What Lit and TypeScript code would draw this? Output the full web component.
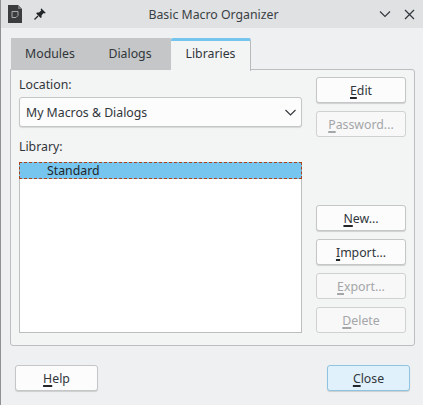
import { LitElement, html, css } from "lit";
import { customElement } from "lit/decorators.js";

@customElement("app-root")
export class AppRoot extends LitElement {
  static styles = css`
    :host {
      display: flex;
      flex-direction: column;
      width: 423px;
      height: 405px;
      box-sizing: border-box;
      background: #eff0f1;
      border-left: 1px solid #8f9193;
      font-family: "Noto Sans", "Open Sans", sans-serif;
      font-size: 12.3px;
      color: #31363b;
      overflow: hidden;
    }
    .title {
      height: 28px;
      flex: none;
      background: #dfe1e3;
      display: flex;
      align-items: center;
      padding: 0 8px 0 7px;
    }
    .title svg { display: block; flex: none; }
    .pin { margin-left: 12px; }
    .name { flex: 1; text-align: center; font-size: 12.3px; color: #3a3f44; padding-left: 2px; }
    .close-x { margin-left: 13px; }
    .body {
      flex: 1;
      display: flex;
      flex-direction: column;
      padding: 10px 8px 14px 9px;
    }
    .tabs { display: flex; height: 32px; padding-left: 1px; position: relative; z-index: 1; }
    .tab {
      background: #c5c6c7;
      display: flex;
      align-items: center;
      justify-content: center;
      color: #31363b;
      padding-bottom: 2px;
      box-sizing: border-box;
    }
    .t1 { width: 80px; padding-right: 2px; }
    .t2 { width: 80px; padding-right: 2px; }
    .t3 {
      width: 80px;
      background: #f3f4f4;
      border-top: 3px solid #76c5ef;
      border-right: 1px solid #b8babc;
      border-radius: 2px 2px 0 0;
      padding-bottom: 5px;
      margin-bottom: -1px;
    }
    .panel {
      height: 277px;
      box-sizing: border-box;
      background: #f3f4f4;
      border: 1px solid #bcbebf;
      border-radius: 0 3px 3px 3px;
      padding: 7px 7px 12px 8px;
      display: flex;
      gap: 14px;
      margin-top: -1px;
    }
    .left { width: 283px; display: flex; flex-direction: column; flex: none; }
    .lbl { height: 20px; line-height: 16px; }
    .combo {
      height: 30px;
      box-sizing: border-box;
      margin-top: 0;
      background: #fcfcfc;
      border: 1px solid #c4c6c7;
      border-radius: 3px;
      box-shadow: 0 1px 1px rgba(0,0,0,.12);
      display: flex;
      align-items: center;
      justify-content: space-between;
      padding: 0 5px 0 6px;
    }
    .lib { margin-top: 12px; height: 23px; }
    .list {
      flex: 1;
      background: #fff;
      border: 1px solid #bcbebf;
      border-top: none;
      box-sizing: border-box;
    }
    .row {
      height: 17px;
      margin: 0 -1px;
      box-sizing: border-box;
      background: #76c5ef;
      border: 1px dashed #a8431c;
      padding-left: 27px;
      line-height: 16px;
      color: #232629;
    }
    .side {
      width: 90px;
      flex: none;
      display: flex;
      flex-direction: column;
      gap: 8px;
    }
    .spacer { height: 52px; }
    .btn {
      height: 26px;
      box-sizing: border-box;
      background: #fcfcfc;
      border: 1px solid #c4c6c7;
      border-radius: 3px;
      box-shadow: 0 1px 1px rgba(0,0,0,.15);
      display: flex;
      align-items: center;
      justify-content: center;
      color: #31363b;
    }
    .btn.off { color: #a4a6a8; box-shadow: none; background: #f8f8f8; border-color: #cfd1d2; }
    u {
      text-decoration: underline;
      text-decoration-thickness: 2px;
      text-underline-offset: 2px;
      text-decoration-color: #232629;
    }
    .off u { text-decoration-color: #a4a6a8; }
    .foot { display: flex; justify-content: space-between; padding: 19px 5px 0 5px; }
    .foot .btn { width: 83px; }
    .btn.primary { background: #e0f1fb; border-color: #8fc4e0; }
  `;

  private b(m: string, rest: string, off = false) {
    return html`<div class="btn ${off ? "off" : ""}"><span><u>${m}</u>${rest}</span></div>`;
  }

  render() {
    return html`
      <div class="title">
        <svg width="14" height="18" viewBox="0 0 14 18">
          <path d="M0 0H10L14 4V18H0Z" fill="#3a3c3e" />
          <path d="M10 0L14 4H10Z" fill="#77797b" />
          <path d="M4 6.5H10V10.5L8 12.5H4Z" fill="none" stroke="#a9abad" stroke-width="1" />
        </svg>
        <svg class="pin" width="12" height="12" viewBox="0 0 12 12">
          <path d="M7.2 0.3L11.7 4.8L10.7 5.4L9.7 5L7.6 7.2L7.6 9.2L6.6 10L2.2 5.6L3 4.6L5 4.6L7.2 2.4L6.7 1.4Z" fill="#232629" />
          <path d="M4 8L0.5 11.5" stroke="#232629" stroke-width="1.2" />
        </svg>
        <div class="name">Basic Macro Organizer</div>
        <svg width="12" height="8" viewBox="0 0 12 8"><path d="M1 1.5L6 6.5L11 1.5" fill="none" stroke="#31363b" stroke-width="1.1" /></svg>
        <svg class="close-x" width="11" height="11" viewBox="0 0 11 11"><path d="M1 1L10 10M10 1L1 10" fill="none" stroke="#31363b" stroke-width="1.2" /></svg>
      </div>
      <div class="body">
        <div class="tabs">
          <div class="tab t1">Modules</div>
          <div class="tab t2">Dialogs</div>
          <div class="tab t3">Libraries</div>
        </div>
        <div class="panel">
          <div class="left">
            <div class="lbl">Location:</div>
            <div class="combo">
              <span>My Macros &amp; Dialogs</span>
              <svg width="11" height="7" viewBox="0 0 11 7"><path d="M0.5 1L5.5 6L10.5 1" fill="none" stroke="#31363b" stroke-width="1.1" /></svg>
            </div>
            <div class="lbl lib">Library:</div>
            <div class="list"><div class="row">Standard</div></div>
          </div>
          <div class="side">
            ${this.b("E", "dit")}
            ${this.b("P", "assword...", true)}
            <div class="spacer"></div>
            ${this.b("N", "ew...")}
            ${this.b("I", "mport...")}
            ${this.b("E", "xport...", true)}
            ${this.b("D", "elete", true)}
          </div>
        </div>
        <div class="foot">
          ${this.b("H", "elp")}
          <div class="btn primary"><span><u>C</u>lose</span></div>
        </div>
      </div>
    `;
  }
}
